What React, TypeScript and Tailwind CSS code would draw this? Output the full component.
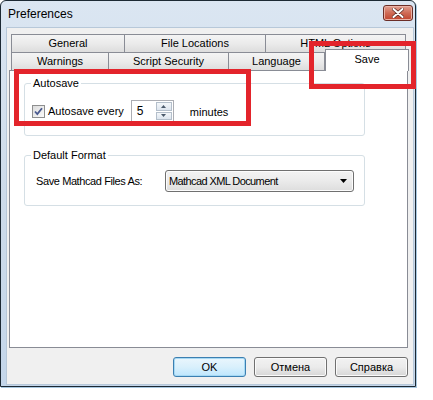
import React from "react";

const font = { fontFamily: '"Liberation Sans", Arial, sans-serif' };

function Tab({ label, w, selected }: { label: string; w: string; selected?: boolean }) {
  if (selected) {
    return (
      <div
        className={`${w} relative z-10 -mb-[1px] -mt-[3px] h-[22px] self-end border border-b-0 border-[#898c95] bg-white pt-[3px] text-center text-[11px] leading-[13px] text-black`}
      >
        {label}
      </div>
    );
  }
  return (
    <div
      className={`${w} -ml-[1px] first:ml-0 h-[18px] border border-b-0 border-[#898c95] bg-gradient-to-b from-[#f4f4f4] via-[#ebebeb] to-[#dddddd] text-center text-[11px] leading-[17px] text-black`}
    >
      {label}
    </div>
  );
}

function Checkbox() {
  return (
    <div className="flex h-[13px] w-[13px] items-center justify-center border border-[#8e8f8f] bg-gradient-to-br from-[#dcdcdc] to-[#fbfbfb]">
      <svg width="9" height="9" viewBox="0 0 9 9">
        <path d="M1 4.5 L3.3 7 L8 1.2" fill="none" stroke="#4a5a8f" strokeWidth="1.8" />
      </svg>
    </div>
  );
}

function Spin() {
  return (
    <div className="flex h-[22px] w-[43px] items-stretch border border-[#abadb3] bg-white">
      <div className="flex-1 pl-[5px] text-[12px] leading-[20px] text-black">5</div>
      <div className="my-[1px] mr-[1px] flex w-[16px] flex-col gap-[1px]">
        <div className="flex flex-1 items-center justify-center border border-[#b4bfcb] bg-gradient-to-b from-[#f4f7fa] to-[#dde5ee]">
          <svg width="5" height="3" viewBox="0 0 5 3">
            <path d="M0 3 L2.5 0 L5 3 Z" fill="#4b5a6b" />
          </svg>
        </div>
        <div className="flex flex-1 items-center justify-center border border-[#b4bfcb] bg-gradient-to-b from-[#f4f7fa] to-[#dde5ee]">
          <svg width="5" height="3" viewBox="0 0 5 3">
            <path d="M0 0 L2.5 3 L5 0 Z" fill="#4b5a6b" />
          </svg>
        </div>
      </div>
    </div>
  );
}

function Button({ label, primary }: { label: string; primary?: boolean }) {
  return (
    <div
      className={
        primary
          ? "flex h-[20px] w-[73px] items-center justify-center rounded-[3px] border border-[#3c7fb1] bg-gradient-to-b from-[#eaf6fd] via-[#d9f0fc] to-[#bee6fd] text-[11px] text-black shadow-[inset_0_0_0_1px_#a6d9f4]"
          : "flex h-[20px] w-[73px] items-center justify-center rounded-[3px] border border-[#707070] bg-gradient-to-b from-[#f2f2f2] via-[#ebebeb] to-[#d6d6d6] text-[11px] text-black shadow-[inset_0_0_0_1px_#fbfbfb]"
      }
    >
      {label}
    </div>
  );
}

export default function App() {
  return (
    <div className="relative h-[400px] w-[433px] overflow-hidden bg-white" style={font}>
      {/* dialog window */}
      <div className="flex h-[387px] w-[416px] flex-col rounded-t-[6px] border border-[#1c2934] bg-gradient-to-b from-[#dbe6f2] via-[#cddbea] to-[#c4d6ea] shadow-[1px_1px_0_#a9c8e0]">
        {/* title bar */}
        <div className="flex h-[26px] items-center justify-between">
          <div className="pl-[7px] text-[12px] text-black">Preferences</div>
          <div className="mr-[2px] flex h-[16px] w-[30px] items-center justify-center self-start mt-[4px] rounded-[3px] border border-[#6b2e27] bg-gradient-to-b from-[#e0a193] via-[#cf6a55] to-[#c0442e] shadow-[inset_0_0_0_1px_#eab2a6]">
            <svg width="12" height="10" viewBox="0 0 12 10">
              <path d="M1.5 1 L10.5 9 M10.5 1 L1.5 9" stroke="#5a2a24" strokeWidth="3.4" strokeLinecap="round" />
              <path d="M1.5 1 L10.5 9 M10.5 1 L1.5 9" stroke="#ffffff" strokeWidth="2" strokeLinecap="round" />
            </svg>
          </div>
        </div>

        {/* client area */}
        <div className="ml-[5px] mr-[1px] mb-[1px] flex flex-1 flex-col border border-[#b7c8d9] bg-[#f0f0f0]">
          {/* tab strip */}
          <div className="pl-[4px] pt-[6px]">
            <div className="flex">
              <Tab label="General" w="w-[114px]" />
              <Tab label="File Locations" w="w-[142px]" />
              <Tab label="HTML Options" w="w-[141px]" />
            </div>
            <div className="flex h-[18px] items-end">
              <Tab label="Warnings" w="w-[98px]" />
              <Tab label="Script Security" w="w-[121px]" />
              <Tab label="Language" w="w-[97px]" />
              <Tab label="Save" w="w-[84px]" selected />
            </div>
          </div>

          {/* tab page */}
          <div className="ml-[2px] h-[278px] w-[399px] border border-[#898c95] bg-white pl-[14px] pt-[6px] text-[11px] text-black">
            <fieldset className="h-[59px] w-[341px] rounded-[3px] border border-[#d5dfe5]">
              <legend className="ml-[6px] px-[2px] leading-[13px]">Autosave</legend>
              <div className="mt-[10px] flex h-[22px] items-center pl-[7px]">
                <Checkbox />
                <span className="ml-[3px]">Autosave every</span>
                <div className="ml-[7px]">
                  <Spin />
                </div>
                <span className="ml-[16px] mt-[2px]">minutes</span>
              </div>
            </fieldset>

            <fieldset className="mt-[13px] h-[57px] w-[341px] rounded-[3px] border border-[#d5dfe5]">
              <legend className="ml-[6px] px-[2px] leading-[13px]">Default Format</legend>
              <div className="mt-[8px] flex h-[22px] items-center pl-[11px]">
                <span className="w-[129px] tracking-[-0.4px]">Save Mathcad Files As:</span>
                <div className="flex h-[22px] w-[189px] items-center justify-between rounded-[3px] border border-[#707070] bg-gradient-to-b from-[#f3f3f3] via-[#ebebeb] to-[#dddddd] pl-[3px] pr-[6px] shadow-[inset_0_0_0_1px_#fcfcfc]">
                  <span className="tracking-[-0.6px]">Mathcad XML Document</span>
                  <svg width="7" height="4" viewBox="0 0 7 4">
                    <path d="M0 0 L7 0 L3.5 4 Z" fill="#000" />
                  </svg>
                </div>
              </div>
            </fieldset>
          </div>

          {/* dialog buttons */}
          <div className="ml-[2px] mt-[9px] flex w-[399px] justify-end gap-[8px]">
            <Button label="OK" primary />
            <Button label="Отмена" />
            <Button label="Справка" />
          </div>
        </div>
      </div>

      {/* highlight frames drawn over the dialog */}
      <div className="absolute left-[14px] top-[69px] h-[57px] w-[237px] border-[5px] border-[#e3242b]" />
      <div className="absolute left-[309px] top-[41px] h-[48px] w-[107px] border-[5px] border-[#e3242b]" />
    </div>
  );
}
